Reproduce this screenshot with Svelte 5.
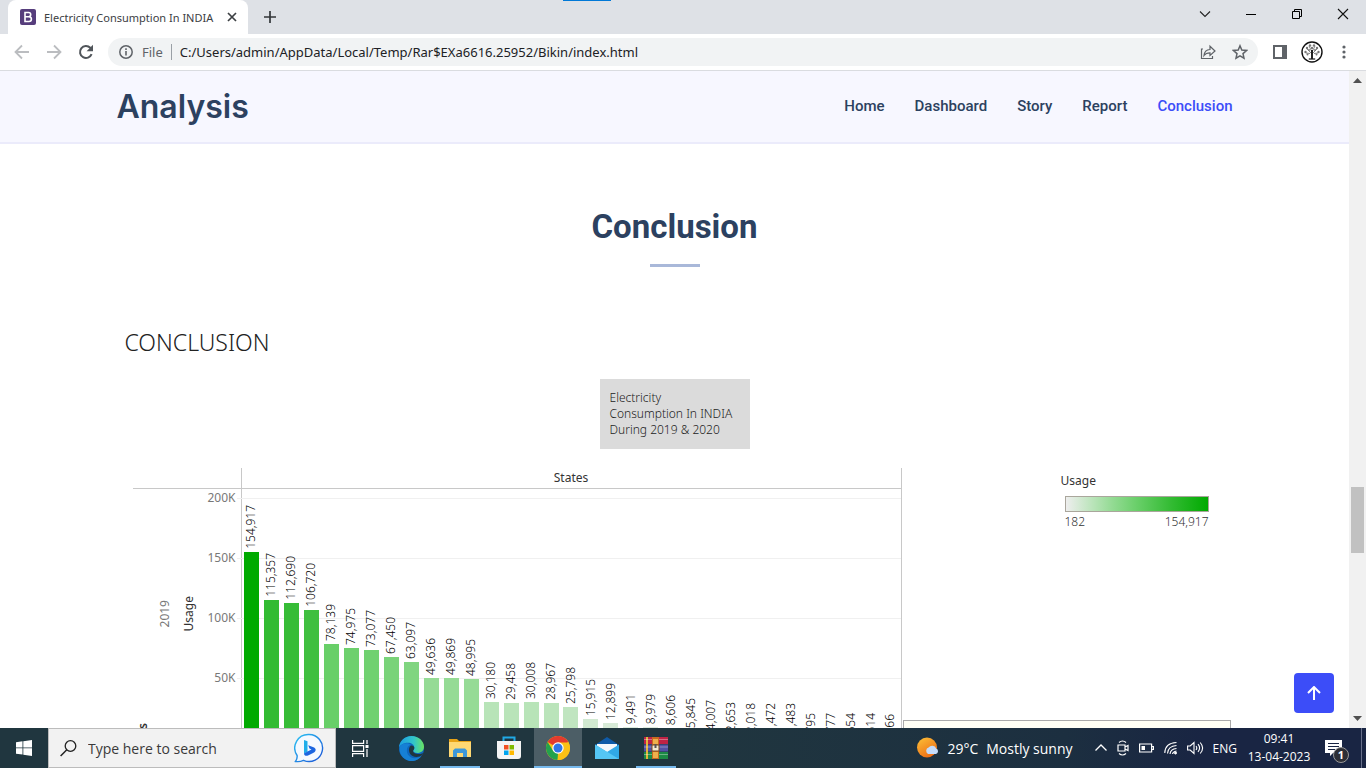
<script>
  const links = ['Home', 'Dashboard', 'Story', 'Report', 'Conclusion'];
  const ticks = ['200K', '150K', '100K', '50K', '0K'];
  const usage = [
    154917, 115357, 112690, 106720, 78139, 74975, 73077, 67450, 63097, 49636, 49869,
    48995, 30180, 29458, 30008, 28967, 25798, 15915, 12899, 9491, 8979, 8606, 5845,
    4007, 2653, 2018, 1472, 1483, 795, 777, 654, 514, 266
  ];
  const stops = [
    [0, 238, 238, 238],
    [0.19, 185, 228, 185],
    [0.32, 149, 219, 149],
    [0.5, 105, 207, 105],
    [0.74, 51, 187, 51],
    [1, 0, 170, 0]
  ];
  const PX_PER_50K = 60;

  function shade(value) {
    const t = value / 154917;
    let i = 1;
    while (i < stops.length - 1 && t > stops[i][0]) i++;
    const a = stops[i - 1];
    const b = stops[i];
    const f = (t - a[0]) / (b[0] - a[0]);
    const c = [1, 2, 3].map((k) => Math.round(a[k] + (b[k] - a[k]) * f));
    return `rgb(${c.join(',')})`;
  }
  const bars = usage.map((v) => ({
    label: v.toLocaleString('en-US'),
    height: Math.round((v / 50000) * PX_PER_50K),
    color: shade(v)
  }));
</script>

<div class="screen">
  <header class="browser">
    <span class="strip"></span>
    <div class="tabs">
      <div class="tab">
        <svg width="16" height="16" viewBox="0 0 16 16"><rect width="16" height="16" rx="2" fill="#563d7c" /><path d="M5 3.5h3.6a2.1 2.1 0 0 1 0 4.2H5zM5 7.7h4a2.4 2.4 0 0 1 0 4.8H5z" fill="none" stroke="#fff" stroke-width="1.6" /></svg>
        <span class="tab-title">Electricity Consumption In INDIA</span>
        <button aria-label="Close tab"><svg width="10" height="10" viewBox="0 0 10 10"><path d="M1 1l8 8M9 1L1 9" stroke="#3c4043" stroke-width="1.7" /></svg></button>
      </div>
      <button class="new" aria-label="New tab"><svg width="12" height="12" viewBox="0 0 12 12"><path d="M6 0v12M0 6h12" stroke="#333639" stroke-width="1.7" /></svg></button>
      <div class="window">
        <button aria-label="Search tabs"><svg width="12" height="12" viewBox="0 0 12 12"><path d="M1 3.5l5 5 5-5" fill="none" stroke="#222" stroke-width="1.1" /></svg></button>
        <button aria-label="Minimise"><svg width="10" height="10" viewBox="0 0 10 10"><path d="M0 5.5h10" stroke="#000" /></svg></button>
        <button aria-label="Restore"><svg width="10" height="10" viewBox="0 0 10 10"><path d="M.5 2.5h7v7h-7zM2.5 2.5v-2h7v7h-2" fill="none" stroke="#000" /></svg></button>
        <button aria-label="Close"><svg width="12" height="12" viewBox="0 0 12 12"><path d="M1 1l10 10M11 1L1 11" stroke="#111" stroke-width="1.1" /></svg></button>
      </div>
    </div>
    <div class="toolbar">
      <button aria-label="Back"><svg width="16" height="16" viewBox="0 0 16 16"><path d="M15 8H2M8 1.5L1.5 8 8 14.500" fill="none" stroke="#bbbdc0" stroke-width="1.8" /></svg></button>
      <button aria-label="Forward"><svg width="16" height="16" viewBox="0 0 16 16"><path d="M1 8h13M8 1.500L14.500 8 8 14.500" fill="none" stroke="#bbbdc0" stroke-width="1.800" /></svg></button>
      <button aria-label="Reload"><svg width="16" height="16" viewBox="0 0 16 16"><path d="M13.600 10.200A6 6 0 1 1 12.300 3.800L14 5.500" fill="none" stroke="#50555a" stroke-width="2" /><path d="M15 .8v6.400H8.600z" fill="#50555a" /></svg></button>
      <div class="address">
        <svg width="16" height="16" viewBox="0 0 16 16"><circle cx="8" cy="8" r="6.200" fill="none" stroke="#5f6368" stroke-width="1.500" /><path d="M8 7v4.400M8 4.300v1.600" stroke="#5f6368" stroke-width="1.600" /></svg>
        <span class="scheme">File</span>
        <input aria-label="Address" value="C:/Users/admin/AppData/Local/Temp/Rar$EXa6616.25952/Bikin/index.html" />
        <button aria-label="Share"><svg width="16" height="16" viewBox="0 0 16 16"><path d="M3 5H1.500v9.500h11V12M4 11.500c.4-4 2.500-5.800 6-6V2.200L15 7l-5 4.500V8.800c-2.700 0-4.600.7-6 2.700z" fill="none" stroke="#5f6368" stroke-width="1.200" /></svg></button>
        <button aria-label="Bookmark"><svg width="16" height="16" viewBox="0 0 16 16"><path d="M8 1.800l1.800 4.300 4.700.4-3.500 3.100 1 4.600L8 11.800l-4 2.400 1-4.600-3.500-3.100 4.700-.4z" fill="none" stroke="#5f6368" stroke-width="1.500" /></svg></button>
      </div>
      <button aria-label="Side panel"><svg width="14" height="14" viewBox="0 0 14 14"><path d="M1 1h12v12H1z" fill="#fff" stroke="#5f6368" stroke-width="2" /><path d="M9 0h5v14H9z" fill="#5f6368" /></svg></button>
      <button aria-label="Profile"><svg width="22" height="22" viewBox="0 0 22 22"><circle cx="11" cy="11" r="10" fill="#fff" stroke="#111" stroke-width="1.400" /><path d="M11 18V9M11 13L6 8M11 13l5-5M11 11L8 5M11 11l3-6M7.500 18h7M5 12l4 .5M17 12l-4 .5" fill="none" stroke="#555" stroke-width=".7" /><path d="M11 9v9" stroke="#111" stroke-width="1.800" /><path d="M8 18h6" stroke="#222" /><g fill="#777"><circle cx="6" cy="7" r="1.200" /><circle cx="9" cy="4.500" r="1.200" /><circle cx="13" cy="4.500" r="1.200" /><circle cx="16" cy="7" r="1.200" /><circle cx="4.500" cy="11" r="1.200" /><circle cx="17.500" cy="11" r="1.200" /><circle cx="11" cy="7" r="1.200" /><circle cx="8" cy="9" r="1" /><circle cx="14" cy="9" r="1" /><circle cx="6.500" cy="13.500" r="1" /><circle cx="15.500" cy="13.500" r="1" /></g></svg></button>
      <button aria-label="Menu"><svg width="4" height="14" viewBox="0 0 4 14" fill="#5f6368"><circle cx="2" cy="2" r="1.600" /><circle cx="2" cy="7" r="1.600" /><circle cx="2" cy="12" r="1.600" /></svg></button>
    </div>
  </header>

  <div class="viewport">
    <main>
      <div class="site-head">
        <div class="container">
          <a class="brand" href="#home">Analysis</a>
          <nav>
            {#each links as link}
              <a href="#{link.toLowerCase()}" class:active={link === 'Conclusion'}>{link}</a>
            {/each}
          </nav>
        </div>
      </div>

      <h2>Conclusion</h2>

      <section class="story">
        <h3>CONCLUSION</h3>
        <p class="caption">Electricity<br />Consumption In INDIA<br />During 2019 &amp; 2020</p>
        <div class="board">
          <div class="chart">
            <div class="corner"></div>
            <div class="states">States</div>
            <div class="axis">
              <div class="side years"><span>Years</span></div>
              <div class="side year"><span>2019</span></div>
              <div class="side measure"><span>Usage</span></div>
              <div class="ticks">
                {#each ticks as tick}<span>{tick}</span>{/each}
              </div>
            </div>
            <div class="plot">
              <div class="lines">{#each ticks as _}<i></i>{/each}</div>
              <div class="bars">
                {#each bars as bar}
                  <div class="bar">
                    <span>{bar.label}</span>
                    <i style="height:{bar.height}px;background:{bar.color}"></i>
                  </div>
                {/each}
              </div>
            </div>
          </div>
          <aside>
            <div class="legend">
              <div class="legend-title">Usage</div>
              <div class="ramp"></div>
              <div class="range"><span>182</span><span>154,917</span></div>
            </div>
            <div class="note"></div>
          </aside>
        </div>
      </section>
      <button class="top" aria-label="Back to top"><svg width="14" height="14" viewBox="0 0 14 14"><path d="M7 14V1.500M1 7l6-6 6 6" fill="none" stroke="#fff" stroke-width="2" /></svg></button>
    </main>
    <div class="scrollbar">
      <svg width="9" height="5" viewBox="0 0 9 5"><path d="M0 5l4.500-5L9 5z" fill="#505050" /></svg>
      <span class="track"><i></i></span>
      <svg width="9" height="5" viewBox="0 0 9 5"><path d="M0 0l4.500 5L9 0z" fill="#505050" /></svg>
    </div>
  </div>

  <footer class="taskbar">
    <button class="slot start" aria-label="Start"><svg width="16" height="16" viewBox="0 0 16 16" fill="#fff"><path d="M0 2.200l6.500-.9v6.200H0zM7.300 1.200L16 0v7.500H7.300zM0 8.300h6.500v6.300L0 13.700zM7.300 8.300H16V16l-8.700-1.200z" /></svg></button>
    <label class="search">
      <svg width="17" height="17" viewBox="0 0 17 17"><circle cx="10.500" cy="6" r="5.300" fill="none" stroke="#222" stroke-width="1.300" /><path d="M6.800 9.800L.6 16" stroke="#222" stroke-width="1.500" /></svg>
      <input aria-label="Search" placeholder="Type here to search" />
      <svg width="30" height="30" viewBox="0 0 30 30"><defs><linearGradient id="bing" x2="1" y2="1"><stop stop-color="#2bc4f3" /><stop offset="1" stop-color="#1b52d6" /></linearGradient></defs><path d="M15 1.500a13.500 13.500 0 1 1-5.500 25.800c-2 1-4.800 1.600-8 1.200 1.500-2 1.900-3.600 1.600-6A13.500 13.500 0 0 1 15 1.500z" fill="#f5f9ff" stroke="url(#bing)" stroke-width="1.400" /><path d="M10 7l3.500 1.200v10.500l-3.500 2z" fill="#20aeea" /><path d="M10 20.500l3.500-2 4-2-2-1-1.300-3.200 5.300 1.900c3 1.200 2.600 4 .5 5.200L14 22.500c-2 1-4-.2-4-2z" fill="#1c65e0" /></svg>
    </label>
    <button class="slot view" aria-label="Task view"><svg width="17" height="17" viewBox="0 0 17 17" fill="none" stroke="#fff" stroke-width="1.200"><path d="M.6 0v3.400h11V0M.6 17v-3.400h11V17M.6 5.600h11v5.800H.6zM15 0v4M15 9v8" /><path d="M15 5v3" stroke-width="3" /></svg></button>
    <button class="slot" aria-label="Edge"><svg width="25" height="25" viewBox="0 0 24 24"><defs><linearGradient id="edge" x2="1"><stop stop-color="#1b9de2" /><stop offset=".6" stop-color="#33c6c8" /><stop offset="1" stop-color="#6be35f" /></linearGradient></defs><circle cx="12" cy="12" r="12" fill="#0d66bd" /><path d="M0 11.500C0 5 5.500 0 12 0c7 0 12 5 12 10.200 0 4-3 6-6.300 6-3 0-4.200-1.200-4.200-2 0-.6 1.200-1.200 1.200-3C14.700 8.500 12 6.500 8.500 6.500 4 6.500.5 9 0 11.500z" fill="url(#edge)" /><path d="M1 10c3-4 8-3.500 10.500-1.500-4 1-5 5.500-3 9.200 2.500 4 8 4.800 13 1.500-3 4.500-8 5.500-12 4.500C3 22-.5 16 1 10z" fill="#1680d5" /><path d="M11.500 9c-3 2-2.500 8 1.500 10.200 3 1.600 6.500 1.200 9.500-1.200l.5-1.800c-3 2-9.500 1.500-9.500-2 0-.6 1.200-1.200 1.200-3 0-1-.8-2-3.200-2.200z" fill="#20363f" /></svg></button>
    <button class="slot run" aria-label="File Explorer"><svg width="22" height="20" viewBox="0 0 22 20"><path d="M0 1h8l2 2h12v16H0z" fill="#e8a317" /><path d="M0 4h22v15H0z" fill="#ffd873" /><path d="M4 19v-6.500L6 10.500h10l2 2V19h-4v-4H8v4z" fill="#3d97d9" /></svg></button>
    <button class="slot" aria-label="Store"><svg width="24" height="24" viewBox="0 0 24 24"><path d="M6.500 6V1.500h11V6" fill="none" stroke="#20a9e6" stroke-width="2" /><path d="M0 5h24v15a3 3 0 0 1-3 3H3a3 3 0 0 1-3-3z" fill="#f4f4f4" /><path d="M7 9h4.500v4.500H7z" fill="#f25022" /><path d="M12.500 9H17v4.500h-4.500z" fill="#7fba00" /><path d="M7 14.500h4.500V19H7z" fill="#00a4ef" /><path d="M12.500 14.500H17V19h-4.500z" fill="#ffb900" /></svg></button>
    <button class="slot run current" aria-label="Chrome"><svg width="24" height="24" viewBox="0 0 24 24"><circle cx="12" cy="12" r="12" fill="#fbc116" /><path d="M12 12L1.600 6A12 12 0 0 1 22.400 6z" fill="#e33b2e" /><path d="M1.600 6L7.200 15l4.800 2.500L11.500 24A12 12 0 0 1 1.600 6z" fill="#23a24d" /><path d="M12 6.500h10.600a12 12 0 0 1-11.100 17.500l5.300-9z" fill="#fbc116" /><circle cx="12" cy="12" r="5.700" fill="#fff" /><circle cx="12" cy="12" r="4.500" fill="#2f76e8" /></svg></button>
    <button class="slot" aria-label="Mail"><svg width="24" height="22" viewBox="0 0 24 22"><path d="M0 8l12-8 12 8v6H0z" fill="#0f5ba8" /><path d="M2 7h20v8H2z" fill="#f4f8fb" /><path d="M0 7.500L12 15 24 7.500V22H0z" fill="#31a8e6" /><path d="M0 7.500L24 22H0z" fill="#55c6f5" /></svg></button>
    <button class="slot run" aria-label="WinRAR"><svg width="24" height="22" viewBox="0 0 24 22"><path d="M0 0h24v7H0z" fill="#bf2345" /><path d="M0 7.500h24v7H0z" fill="#5251a5" /><path d="M0 15h24v7H0z" fill="#1d8a45" /><path d="M2 0h2v22H2z" fill="#e3b53b" /><path d="M0 2.500h24M0 10h24M0 17.500h24" stroke="#fff" stroke-opacity=".35" /><path d="M8 0h7v22H8z" fill="#c96a20" /><path d="M9 2h5v5H9zM9 15h5v6H9z" fill="#eeb04c" /><path d="M8 8h7v6H8z" fill="#f3ead2" stroke="#7a481d" /><path d="M11.500 7v4" stroke="#555" stroke-width="2" /></svg></button>

    <div class="tray">
      <div class="weather">
        <svg width="22" height="22" viewBox="0 0 22 22"><defs><linearGradient id="sun" x2=".6" y2="1"><stop stop-color="#fcc238" /><stop offset="1" stop-color="#ee6f16" /></linearGradient></defs><circle cx="10" cy="10.500" r="10" fill="url(#sun)" /><path d="M11 17a3.500 3.500 0 0 1 .6-6.400 4.300 4.300 0 0 1 7.600.8A3 3 0 0 1 19 17z" fill="#c5dcfb" /></svg>
        <span>29°C</span><span>Mostly sunny</span>
      </div>
      <div class="status">
        <svg width="12" height="16" viewBox="0 0 12 16"><path d="M.5 10.500L6 5l5.500 5.500" fill="none" stroke="#fff" stroke-width="1.300" /></svg>
        <svg width="12" height="16" viewBox="0 0 12 16" fill="none" stroke="#fff" stroke-width="1.200"><path d="M1 5h7v6H1zM8 7l3-1.500v5L8 9M2 2.500Q5.500-.5 9 2.500M2 13.500q3.500 3 7 0" /></svg>
        <svg width="15" height="16" viewBox="0 0 15 16"><path d="M.6 4h12v8H.6zM13 6.500h1.400v3H13" fill="none" stroke="#fff" stroke-width="1.200" /><path d="M2.500 6h3.500v4H2.500z" fill="#fff" /></svg>
        <svg width="13" height="16" viewBox="0 0 13 16" fill="none" stroke="#fff"><path d="M.8 13Q1 3 12.500 2.500M3.500 13.500Q4 6 12.500 5.500M6 14Q6.500 9 12.500 8.500" stroke-width="1.100" /><path d="M8.500 14q.5-2.500 4-3" stroke-width="1.200" /><circle cx="11.500" cy="13" r="1" fill="#fff" /></svg>
        <svg width="17" height="16" viewBox="0 0 17 16" fill="none" stroke="#fff" stroke-width="1.100"><path d="M.6 6h2.600L7 2.500v11L3.200 10H.6zM9 6q1.600 2 0 4M11 4.200q3.200 3.800 0 7.600M13.200 2.500q4.800 5.500 0 11" /></svg>
      </div>
      <span class="lang">ENG</span>
      <div class="clock"><span>09:41</span><span>13-04-2023</span></div>
      <button class="notice" aria-label="Notifications"><svg width="17" height="16" viewBox="0 0 17 16"><path d="M0 0h17v13H8l-3 3v-3H0z" fill="#fff" /><path d="M3 3.500h11M3 6.500h11M3 9.500h7" stroke="#192543" stroke-width="1.200" /></svg><b>1</b></button>
      <i class="peek"></i>
    </div>
  </footer>
</div>

<style>
  :global(body) { margin: 0; overflow: hidden; }
  .screen { display: flex; flex-direction: column; height: 100vh; font-family: "Open Sans", "Noto Sans", sans-serif; background: #fff; }
  .screen * { box-sizing: border-box; }
  svg { display: block; flex: none; }
  button { border: 0; padding: 0; background: none; display: flex; align-items: center; justify-content: center; font: inherit; }
  input { border: 0; outline: 0; background: none; font: inherit; padding: 0; min-width: 0; flex: 1; }
  a { text-decoration: none; }

  .browser { position: relative; flex: none; border-bottom: 1px solid #dadce0; }
  .strip { position: absolute; top: 0; left: 563px; width: 48px; height: 1px; background: #0078d7; }
  .tabs { display: flex; height: 34px; padding-left: 8px; background: #dee1e6; }
  .tab { display: flex; align-items: center; gap: 8px; width: 240px; padding: 0 11px 0 12px; background: #fff; border-radius: 8px 8px 0 0; color: #3c4043; }
  .tab-title { flex: 1; white-space: nowrap; overflow: hidden; font-family: "Noto Sans", sans-serif; font-size: 11px; }
  .new { width: 44px; }
  .window { display: flex; margin-left: auto; }
  .window button { width: 46px; height: 28px; }
  .toolbar { display: flex; align-items: center; height: 36px; padding: 0 6px; background: #fff; }
  .toolbar button { width: 32px; flex: none; }
  .address { flex: 1; display: flex; align-items: center; height: 28px; margin: 0 6px; padding: 0 2px 0 10px; border-radius: 14px; background: #f1f3f4; font-family: "Noto Sans", sans-serif; font-size: 13px; color: #202124; }
  .scheme { color: #5f6368; margin: 0 8px; padding-right: 8px; border-right: 1px solid #9aa0a6; line-height: 16px; }
  .address input { color: #202124; }

  .viewport { flex: 1; display: flex; min-height: 0; }
  main { position: relative; flex: 1; min-width: 0; overflow: hidden; }
  .scrollbar { width: 17px; display: flex; flex-direction: column; align-items: center; padding: 7px 0; background: #f1f1f1; }
  .track { flex: 1; width: 13px; display: flex; align-items: flex-end; padding-bottom: 163px; }
  .track i { width: 13px; height: 66px; background: #c1c1c1; }

  .site-head { background: #f7f7ff; border-bottom: 2px solid #ebebfb; }
  .container { display: flex; align-items: center; justify-content: space-between; max-width: 1116px; height: 71px; margin: 0 auto; }
  .brand { font-family: Inter, sans-serif; font-weight: 600; font-size: 32px; color: #2c4160; }
  nav { display: flex; gap: 30px; font: 500 15px/20px Roboto, sans-serif; padding-bottom: 2px; }
  nav a { color: #2c4160; }
  nav a.active { color: #3c4df8; }

  h2 { margin: 59px 0 0; display: flex; flex-direction: column; align-items: center; font: 700 33px/48px Roboto, sans-serif; color: #2c4160; }
  h2::after { content: ""; width: 50px; height: 3px; margin-top: 13px; background: #a9b8d9; }

  .story { max-width: 1116px; margin: 58px auto 0; padding: 0 8px; color: #333; font-family: "Noto Sans", "Open Sans", sans-serif; font-size: 12px; }
  h3 { margin: 0; font-weight: 300; font-size: 23px; line-height: 34px; color: #222; }
  .caption { width: 150px; margin: 20px auto 19px; padding: 11px 10px; background: #dbdbdb; line-height: 16px; color: #222; font-weight: 300; white-space: nowrap; }
  .board { display: flex; padding-left: 8px; margin-right: -8px; }
  .chart { display: grid; grid-template-columns: 108px 661px; grid-template-rows: 21px 500px; }
  .corner { border-bottom: 1px solid #c8c8c8; }
  .states { border: 1px solid #c8c8c8; border-top: 0; text-align: center; line-height: 20px; }
  .axis { display: grid; grid-template-columns: 20px 24px 24px 35px; }
  .side { display: flex; align-items: center; justify-content: center; }
  .side span, .bar span { writing-mode: vertical-rl; transform: rotate(180deg); }
  .year, .measure { height: 250px; }
  .year { color: #787878; }
  .years { font-weight: 600; }
  .ticks { display: flex; flex-direction: column; align-items: flex-end; gap: 42px; color: #787878; line-height: 18px; }
  .plot { position: relative; border: 1px solid #c8c8c8; border-width: 0 1px; height: 249px; }
  .lines { position: absolute; inset: 9px 0 0 -5px; }
  .lines i { display: block; height: 60px; border-top: 1px solid #f0f0f0; }
  .bars { position: relative; display: flex; height: 249px; }
  .bar { flex: 1; display: flex; flex-direction: column; align-items: center; justify-content: flex-end; gap: 3px; font-weight: 300; color: #000; }
  .bar span { line-height: 16px; }
  .bar i { width: 15px; flex: none; }
  aside { flex: 1; max-width: 329px; display: flex; flex-direction: column; padding-left: 1px; }
  .legend { width: 148px; margin: 3px 0 0 158px; height: 249px; }
  .legend-title { line-height: 20px; }
  .ramp { height: 16px; margin: 5px 0 0 4px; border: 1px solid #aaa69c; background: linear-gradient(90deg, #eee, #b9e4b9 19%, #95db95 32%, #69cf69 50%, #33bb33 74%, #00aa00); }
  .range { display: flex; justify-content: space-between; padding-left: 4px; color: #333; line-height: 20px; font-weight: 300; }
  .note { height: 120px; border: 1px solid #aaa; background: #fffff5; }
  .top { position: absolute; right: 15px; bottom: 15px; width: 40px; height: 40px; border-radius: 4px; background: #3c4df8; }

  .taskbar { display: flex; flex: none; height: 40px; background: linear-gradient(90deg, #20363f 50%, #1c2f40 78%, #192543 88%); color: #fff; }
  .slot { position: relative; width: 48px; margin-right: 1px; }
  .start { margin-right: 0; }
  .view { margin-right: 3px; }
  .run::after { content: ""; position: absolute; bottom: 0; left: 4px; right: 4px; height: 2px; background: #76b9ed; }
  .current { background: #4c5e66; }
  .current::after { left: 0; right: 0; }
  .search { display: flex; align-items: center; gap: 11px; width: 288px; padding: 0 11px; background: #f2f2f2; border: 1px solid #bcbcbc; }
  .search input { color: #333; font-size: 14px; }
  .search input::placeholder { color: #3a3a3a; opacity: 1; }
  .tray { margin-left: auto; display: flex; align-items: center; }
  .weather { display: flex; align-items: center; gap: 8px; font-size: 14px; margin-right: 22px; white-space: nowrap; }
  .status { display: flex; align-items: center; gap: 10px; }
  .lang { margin-left: 9px; font-size: 12px; }
  .clock { width: 84px; display: flex; flex-direction: column; align-items: center; font-size: 12px; line-height: 18px; }
  .notice { position: relative; width: 36px; height: 40px; padding-right: 12px; }
  .notice b { position: absolute; right: 8px; bottom: 5px; width: 16px; height: 16px; border: 1px solid #999; border-radius: 50%; background: #2d2f36; color: #fff; font-size: 11px; line-height: 14px; text-align: center; }
  .peek { width: 5px; height: 40px; margin-left: 4px; border-left: 1px solid #68708a; }
</style>
